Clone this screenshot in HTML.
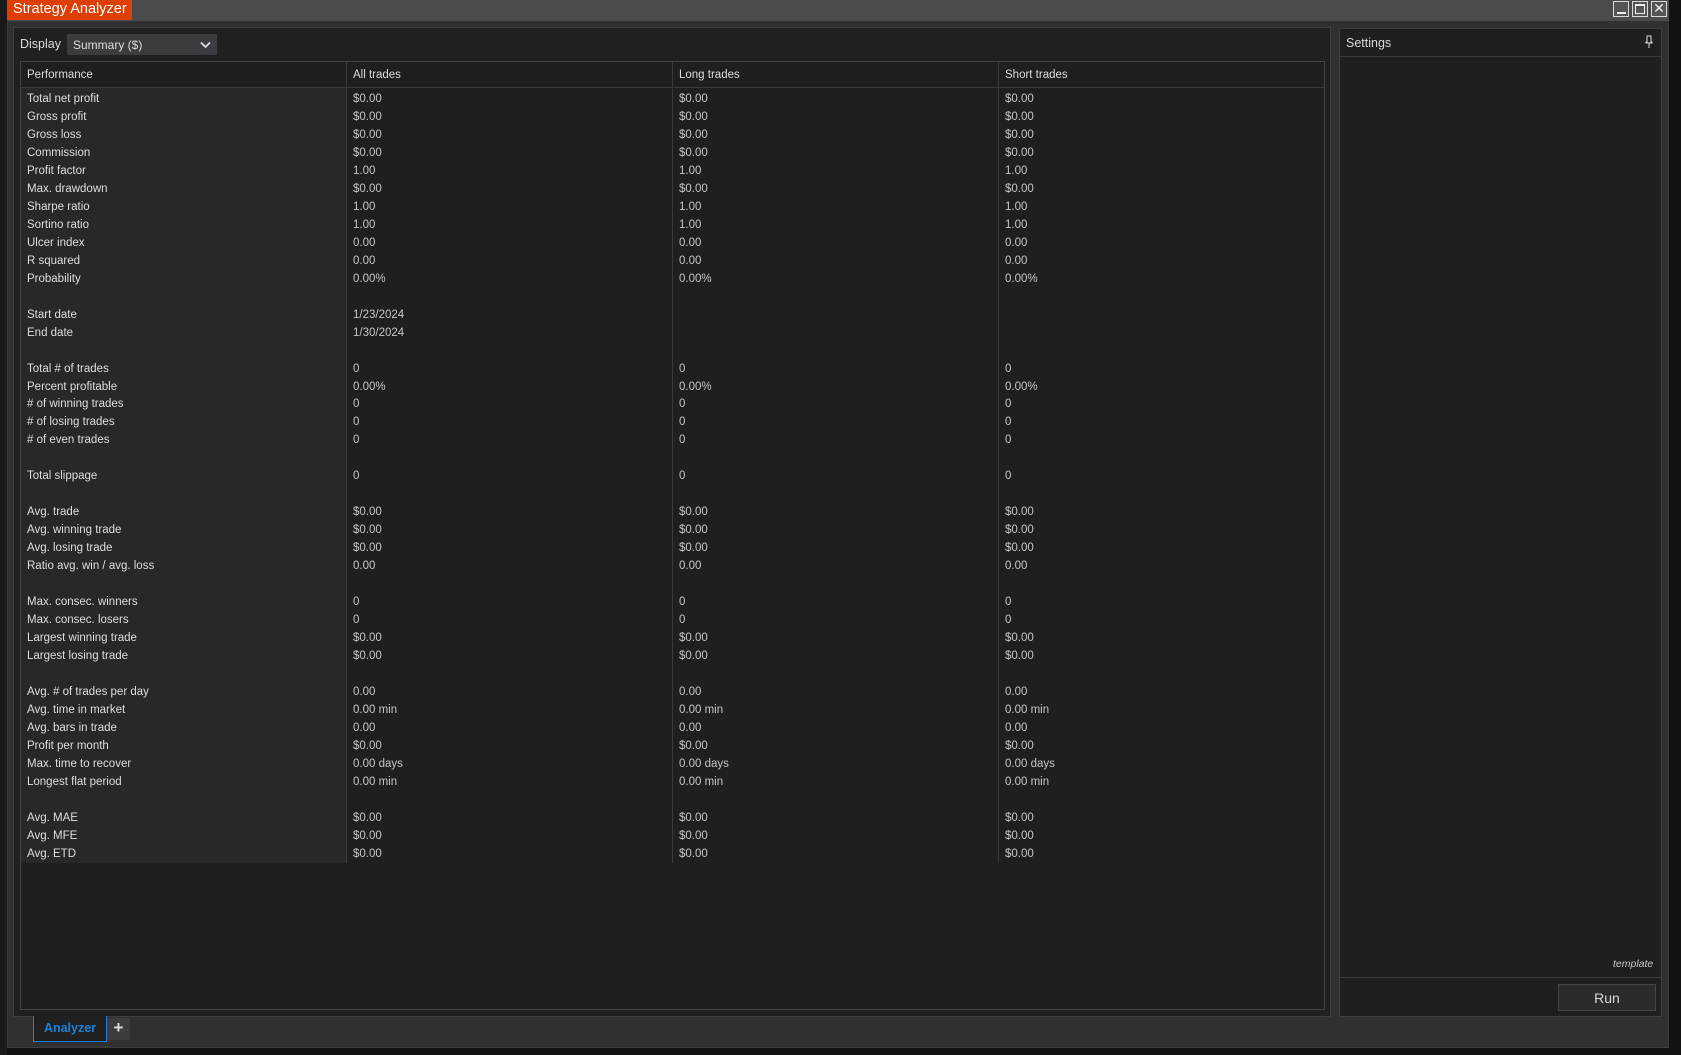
<!DOCTYPE html>
<html><head><meta charset="utf-8"><style>
*{margin:0;padding:0;box-sizing:border-box}
body{width:1681px;height:1055px;background:#121214;position:relative;overflow:hidden;font-family:"Segoe UI","Liberation Sans","DejaVu Sans",sans-serif;font-size:11.5px;color:#d4d4d4}
.a{position:absolute}
#win{left:7px;top:0;width:1662px;height:1048px;background:#303032;border:1px solid #3c3c3e}
#tb{left:7px;top:0;width:1662px;height:21px;background:#4b4b4b}
#title{left:7px;top:0;width:125px;height:20px;background:#dd3e04;color:#fff;font-size:14.5px;line-height:19px;padding-left:6px}
.wb{top:1px;width:16px;height:16px;border:1px solid #d8d8d8;background:#555}
#lp{left:13px;top:27px;width:1318px;height:990px;background:#202020;border:1px solid #3e3e40}
#tf{left:20px;top:61px;width:1305px;height:949px;border:1px solid #434345;background:#1f1f1f}
#hdr{left:21px;top:62px;width:1303px;height:26px;border-bottom:1px solid #3a3a3a}
.h{position:absolute;top:7px;color:#dcdcdc}
#pc{left:21px;top:88px;width:325px;height:775px;background:#282828}
.vl{position:absolute;width:1px;background:#3a3a3a}
#rows{left:21px;top:90px;width:1303px}
.r{position:relative;height:17.98px;line-height:18px}
.r span{position:absolute;top:0;white-space:nowrap}
.r span:nth-child(1){left:6px;color:#dedede}
.r span:nth-child(2){left:332px;color:#c6c6c6}
.r span:nth-child(3){left:658px;color:#c6c6c6}
.r span:nth-child(4){left:984px;color:#c6c6c6}
#sp{left:1339px;top:28px;width:323px;height:989px;background:#1f1f1f;border:1px solid #3e3e40}
</style></head><body>
<div class="a" style="left:0;top:0;width:7px;height:1055px;background:#1a1a1c"></div>
<div class="a" id="win"></div>
<div class="a" id="tb"></div>
<div class="a" id="title">Strategy Analyzer</div>
<div class="a wb" style="left:1613px"><div class="a" style="left:3px;top:10px;width:9px;height:2px;background:#eee"></div></div>
<div class="a wb" style="left:1632px"><div class="a" style="left:2px;top:2px;width:10px;height:10px;border:1px solid #eee;border-top-width:2px"></div></div>
<div class="a wb" style="left:1651px;color:#eee;font-size:14px;line-height:13px;text-align:center;font-weight:bold">✕</div>

<div class="a" id="lp"></div>
<div class="a" style="left:20px;top:37px;color:#dcdcdc;font-size:12.5px">Display</div>
<div class="a" style="left:67px;top:34px;width:150px;height:21px;background:#3c3c40;color:#dcdcdc;font-size:12px;line-height:22px;padding-left:6px">Summary ($)
<svg class="a" style="left:133px;top:7px" width="11" height="8" viewBox="0 0 11 8"><path d="M1 1.5 L5.5 6 L10 1.5" stroke="#ddd" stroke-width="1.8" fill="none"/></svg></div>

<div class="a" id="tf"></div>
<div class="a" id="pc"></div>
<div class="a" id="hdr">
<span class="h" style="left:6px">Performance</span>
<span class="h" style="left:332px">All trades</span>
<span class="h" style="left:658px">Long trades</span>
<span class="h" style="left:984px">Short trades</span>
</div>
<div class="vl a" style="left:346px;top:62px;height:801px"></div>
<div class="vl a" style="left:672px;top:62px;height:801px"></div>
<div class="vl a" style="left:998px;top:62px;height:801px"></div>

<div class="a" id="rows">
<div class="r"><span>Total net profit</span><span>$0.00</span><span>$0.00</span><span>$0.00</span></div>
<div class="r"><span>Gross profit</span><span>$0.00</span><span>$0.00</span><span>$0.00</span></div>
<div class="r"><span>Gross loss</span><span>$0.00</span><span>$0.00</span><span>$0.00</span></div>
<div class="r"><span>Commission</span><span>$0.00</span><span>$0.00</span><span>$0.00</span></div>
<div class="r"><span>Profit factor</span><span>1.00</span><span>1.00</span><span>1.00</span></div>
<div class="r"><span>Max. drawdown</span><span>$0.00</span><span>$0.00</span><span>$0.00</span></div>
<div class="r"><span>Sharpe ratio</span><span>1.00</span><span>1.00</span><span>1.00</span></div>
<div class="r"><span>Sortino ratio</span><span>1.00</span><span>1.00</span><span>1.00</span></div>
<div class="r"><span>Ulcer index</span><span>0.00</span><span>0.00</span><span>0.00</span></div>
<div class="r"><span>R squared</span><span>0.00</span><span>0.00</span><span>0.00</span></div>
<div class="r"><span>Probability</span><span>0.00%</span><span>0.00%</span><span>0.00%</span></div>
<div class="r"></div>
<div class="r"><span>Start date</span><span>1/23/2024</span></div>
<div class="r"><span>End date</span><span>1/30/2024</span></div>
<div class="r"></div>
<div class="r"><span>Total # of trades</span><span>0</span><span>0</span><span>0</span></div>
<div class="r"><span>Percent profitable</span><span>0.00%</span><span>0.00%</span><span>0.00%</span></div>
<div class="r"><span># of winning trades</span><span>0</span><span>0</span><span>0</span></div>
<div class="r"><span># of losing trades</span><span>0</span><span>0</span><span>0</span></div>
<div class="r"><span># of even trades</span><span>0</span><span>0</span><span>0</span></div>
<div class="r"></div>
<div class="r"><span>Total slippage</span><span>0</span><span>0</span><span>0</span></div>
<div class="r"></div>
<div class="r"><span>Avg. trade</span><span>$0.00</span><span>$0.00</span><span>$0.00</span></div>
<div class="r"><span>Avg. winning trade</span><span>$0.00</span><span>$0.00</span><span>$0.00</span></div>
<div class="r"><span>Avg. losing trade</span><span>$0.00</span><span>$0.00</span><span>$0.00</span></div>
<div class="r"><span>Ratio avg. win / avg. loss</span><span>0.00</span><span>0.00</span><span>0.00</span></div>
<div class="r"></div>
<div class="r"><span>Max. consec. winners</span><span>0</span><span>0</span><span>0</span></div>
<div class="r"><span>Max. consec. losers</span><span>0</span><span>0</span><span>0</span></div>
<div class="r"><span>Largest winning trade</span><span>$0.00</span><span>$0.00</span><span>$0.00</span></div>
<div class="r"><span>Largest losing trade</span><span>$0.00</span><span>$0.00</span><span>$0.00</span></div>
<div class="r"></div>
<div class="r"><span>Avg. # of trades per day</span><span>0.00</span><span>0.00</span><span>0.00</span></div>
<div class="r"><span>Avg. time in market</span><span>0.00 min</span><span>0.00 min</span><span>0.00 min</span></div>
<div class="r"><span>Avg. bars in trade</span><span>0.00</span><span>0.00</span><span>0.00</span></div>
<div class="r"><span>Profit per month</span><span>$0.00</span><span>$0.00</span><span>$0.00</span></div>
<div class="r"><span>Max. time to recover</span><span>0.00 days</span><span>0.00 days</span><span>0.00 days</span></div>
<div class="r"><span>Longest flat period</span><span>0.00 min</span><span>0.00 min</span><span>0.00 min</span></div>
<div class="r"></div>
<div class="r"><span>Avg. MAE</span><span>$0.00</span><span>$0.00</span><span>$0.00</span></div>
<div class="r"><span>Avg. MFE</span><span>$0.00</span><span>$0.00</span><span>$0.00</span></div>
<div class="r"><span>Avg. ETD</span><span>$0.00</span><span>$0.00</span><span>$0.00</span></div>
</div>

<div class="a" id="sp"></div>
<div class="a" style="left:1346px;top:36px;color:#d8d8d8;font-size:12.5px">Settings</div>
<svg class="a" style="left:1645px;top:35px" width="8" height="14" viewBox="0 0 8 14"><path d="M2 1 H6 V7 H7 V8 H1 V7 H2 Z M4 8 V13" stroke="#ddd" stroke-width="1" fill="none"/></svg>
<div class="a" style="left:1340px;top:56px;width:321px;height:1px;background:#3a3a3a"></div>
<div class="a" style="left:1613px;top:958px;color:#c8c8c8;font-size:10.5px;font-style:italic">template</div>
<div class="a" style="left:1340px;top:977px;width:321px;height:1px;background:#3a3a3a"></div>
<div class="a" style="left:1558px;top:984px;width:98px;height:27px;background:#2b2b2d;border:1px solid #444;color:#d8d8d8;font-size:14px;line-height:26px;text-align:center">Run</div>

<div class="a" style="left:33px;top:1016px;width:74px;height:26px;border:1px solid #1a7fd4;border-top:none;background:#202020;color:#1a82dc;font-weight:bold;font-size:12.5px;line-height:25px;text-align:center">Analyzer</div>
<div class="a" style="left:107px;top:1018px;width:23px;height:22px;background:#3c3c40;color:#ddd;font-size:17px;line-height:20px;text-align:center;font-weight:bold">+</div>
</body></html>
